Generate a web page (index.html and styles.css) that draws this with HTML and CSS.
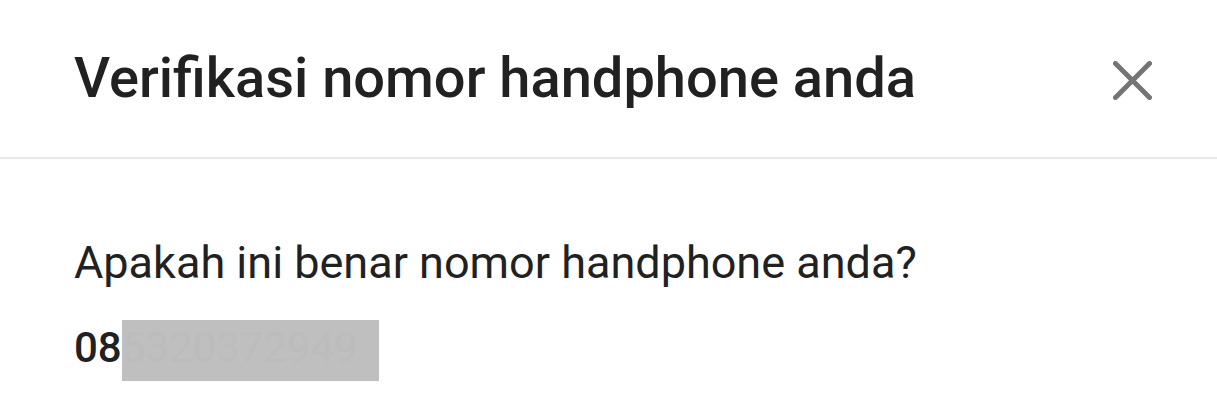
FILE: index.html
```html
<!DOCTYPE html>
<html lang="id">
<head>
<meta charset="utf-8">
<title>Verifikasi nomor handphone anda</title>
<link rel="stylesheet" href="styles.css">
</head>
<body>
<div class="dialog">
  <header class="dialog-header">
    <h1 class="dialog-title">Verifikasi nomor handphone anda</h1>
    <button class="close-btn" type="button" aria-label="Tutup">
      <svg class="close-icon" width="39" height="39" viewBox="0 0 39 39" aria-hidden="true">
        <line x1="2.5" y1="2.5" x2="36.5" y2="36.5"/>
        <line x1="36.5" y1="2.5" x2="2.5" y2="36.5"/>
      </svg>
    </button>
  </header>
  <section class="dialog-body">
    <p class="question">Apakah ini benar nomor handphone anda?</p>
    <div class="phone">
      <span class="phone-prefix">08</span><span class="phone-mask">5320372949</span>
    </div>
  </section>
</div>
</body>
</html>
```

FILE: styles.css
```css
html, body {
  margin: 0;
  padding: 0;
  background: #ffffff;
}

body {
  font-family: Roboto, "Liberation Sans", Arial, sans-serif;
  color: #212121;
}

.dialog {
  width: 100%;
}

.dialog-header {
  display: flex;
  align-items: center;
  justify-content: space-between;
  padding: 46px 65px 47px 74px;
  border-bottom: 2px solid #e6e8eb;
}

.dialog-title {
  margin: 0;
  font-size: 56px;
  line-height: 64px;
  font-weight: 500;
  color: #212121;
}

.close-btn {
  display: flex;
  padding: 0;
  margin: 4px 0 0 0;
  border: 0;
  background: transparent;
  cursor: pointer;
}

.close-icon line {
  stroke: #757575;
  stroke-width: 5;
  stroke-linecap: round;
}

.dialog-body {
  padding: 76px 74px 0 74px;
}

.question {
  margin: 0;
  font-size: 45px;
  line-height: 56px;
  font-weight: 400;
  color: #212121;
}

.phone {
  display: flex;
  align-items: baseline;
  margin-top: 29px;
  font-size: 42px;
  line-height: 50px;
  font-weight: 500;
}

.phone-prefix {
  color: #212121;
}

.phone-mask {
  display: inline-block;
  padding: 3px 21px 8px 0;
  background: #bfbfbf;
  color: #bcbcbc;
  font-weight: 400;
}
```
